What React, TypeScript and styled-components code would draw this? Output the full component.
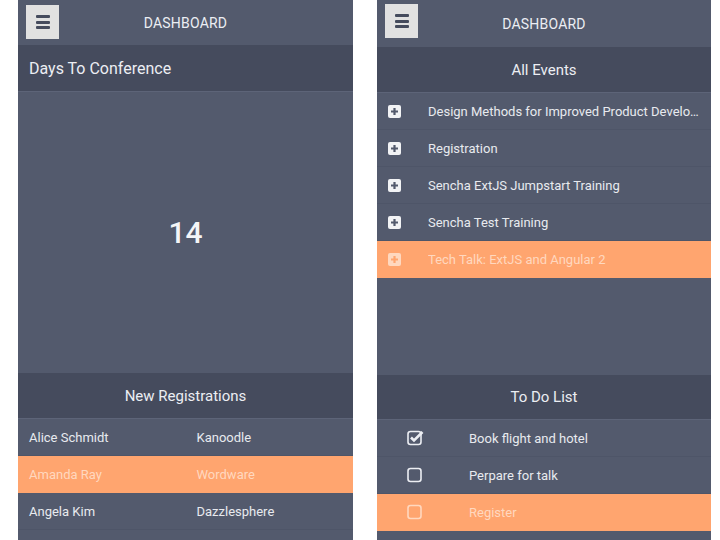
import React from 'react';
import styled, {createGlobalStyle} from 'styled-components';

const GlobalStyle = createGlobalStyle`
  *, *::before, *::after {
    box-sizing: border-box;
  }
  html, body {
    margin: 0;
    background: #ffffff;
    font-family: Roboto, "Liberation Sans", sans-serif;
  }
`

const Page = styled.div`
  display: flex;
  gap: 24px;
  padding-left: 18px;
  height: 540px;
  overflow: hidden;
`

const Phone = styled.div<{w: number}>`
  width: ${p => p.w}px;
  background: #535a6d;
  display: flex;
  flex-direction: column;
  color: #eceef3;
`

const TopBar = styled.div<{h: number}>`
  height: ${p => p.h}px;
  flex-shrink: 0;
  position: relative;
  display: flex;
  align-items: center;
  justify-content: center;
  font-size: 14px;
  letter-spacing: 0.2px;
`

const MenuBtn = styled.button<{top: number}>`
  position: absolute;
  left: 8px;
  top: ${p => p.top}px;
  width: 33px;
  height: 34px;
  border: none;
  padding: 0;
  background: #e1e1e1;
  display: flex;
  flex-direction: column;
  align-items: center;
  justify-content: center;
  gap: 2.5px;
  & span {
    width: 14px;
    height: 3px;
    border-radius: 1px;
    background: #454b5d;
  }
`

const SectionHead = styled.div<{h: number; left?: boolean}>`
  height: ${p => p.h}px;
  flex-shrink: 0;
  background: #454b5d;
  display: flex;
  align-items: center;
  justify-content: ${p => (p.left ? 'flex-start' : 'center')};
  padding: 0 ${p => (p.left ? '11px' : '0')};
  font-size: ${p => (p.left ? '16px' : '15px')};
  border-bottom: 1px solid #5d6478;
`

const BigNumber = styled.div<{h: number}>`
  height: ${p => p.h}px;
  flex-shrink: 0;
  display: flex;
  align-items: center;
  justify-content: center;
  font-size: 30px;
  font-weight: 500;
  color: #f4f5f7;
`

const Spacer = styled.div<{h: number; w?: number}>`
  height: ${p => p.h}px;
  width: ${p => (p.w ? `${p.w}px` : 'auto')};
  flex-shrink: 0;
`

const Row = styled.div<{active?: boolean}>`
  height: 37px;
  flex-shrink: 0;
  display: flex;
  align-items: center;
  font-size: 13px;
  border-bottom: 1px solid ${p => (p.active ? '#ffa56f' : '#4e5568')};
  background: ${p => (p.active ? '#ffa56f' : '#535a6d')};
  color: ${p => (p.active ? '#ffd8bf' : '#e8eaef')};
  white-space: nowrap;
`

const Cell = styled.div`
  flex: 1;
  padding-left: 11px;
  overflow: hidden;
  text-overflow: ellipsis;
`

const IconCell = styled.div<{w: number}>`
  width: ${p => p.w}px;
  flex-shrink: 0;
  display: flex;
  align-items: center;
  justify-content: center;
`

const RowText = styled.div`
  flex: 1;
  overflow: hidden;
  text-overflow: ellipsis;
  padding-right: 10px;
`

const PlusIcon = ({active}: {active?: boolean}) => (
  <svg width="13" height="13" viewBox="0 0 13 13">
    <rect x="0" y="0" width="13" height="13" rx="2" fill={active ? '#ffd8bf' : '#f2f3f5'} />
    <path d="M6.5 3v7M3 6.5h7" stroke={active ? '#ffa56f' : '#535a6d'} strokeWidth="2.2" />
  </svg>
)

const CheckIcon = ({checked, active}: {checked?: boolean; active?: boolean}) => {
  const c = active ? '#ffd8bf' : '#eceef3'
  return (
    <svg width="17" height="16" viewBox="0 0 17 16">
      <rect x="1" y="1.5" width="13" height="13" rx="2.5" fill="none" stroke={c} strokeWidth="1.6" />
      {checked && (
        <path d="M4 7.5l3 3L15.5 2" fill="none" stroke={c} strokeWidth="2.6" />
      )}
    </svg>
  )
}

const registrations = [
  {name: 'Alice Schmidt', company: 'Kanoodle'},
  {name: 'Amanda Ray', company: 'Wordware', active: true},
  {name: 'Angela Kim', company: 'Dazzlesphere'},
]

const events = [
  {title: 'Design Methods for Improved Product Development and Innovation'},
  {title: 'Registration'},
  {title: 'Sencha ExtJS Jumpstart Training'},
  {title: 'Sencha Test Training'},
  {title: 'Tech Talk: ExtJS and Angular 2', active: true},
]

const todos = [
  {text: 'Book flight and hotel', done: true},
  {text: 'Perpare for talk'},
  {text: 'Register', active: true},
]

const Menu = ({top}: {top: number}) => (
  <MenuBtn top={top}>
    <span />
    <span />
    <span />
  </MenuBtn>
)

export default function App() {
  return (
    <>
      <GlobalStyle />
      <Page>
        <Phone w={335}>
          <TopBar h={45}>
            <Menu top={5} />
            DASHBOARD
          </TopBar>
          <SectionHead h={47} left>Days To Conference</SectionHead>
          <BigNumber h={281}>14</BigNumber>
          <SectionHead h={46}>New Registrations</SectionHead>
          {registrations.map(r => (
            <Row key={r.name} active={r.active}>
              <Cell>{r.name}</Cell>
              <Cell>{r.company}</Cell>
            </Row>
          ))}
        </Phone>
        <Phone w={334}>
          <TopBar h={47}>
            <Menu top={4} />
            DASHBOARD
          </TopBar>
          <SectionHead h={46}>All Events</SectionHead>
          {events.map(e => (
            <Row key={e.title} active={e.active}>
              <IconCell w={34}>
                <PlusIcon active={e.active} />
              </IconCell>
              <Spacer h={0} w={17} />
              <RowText>{e.title}</RowText>
            </Row>
          ))}
          <Spacer h={97} />
          <SectionHead h={45}>To Do List</SectionHead>
          {todos.map(t => (
            <Row key={t.text} active={t.active}>
              <IconCell w={76}>
                <CheckIcon checked={t.done} active={t.active} />
              </IconCell>
              <Spacer h={0} w={16} />
              <RowText>{t.text}</RowText>
            </Row>
          ))}
        </Phone>
      </Page>
    </>
  )
}
